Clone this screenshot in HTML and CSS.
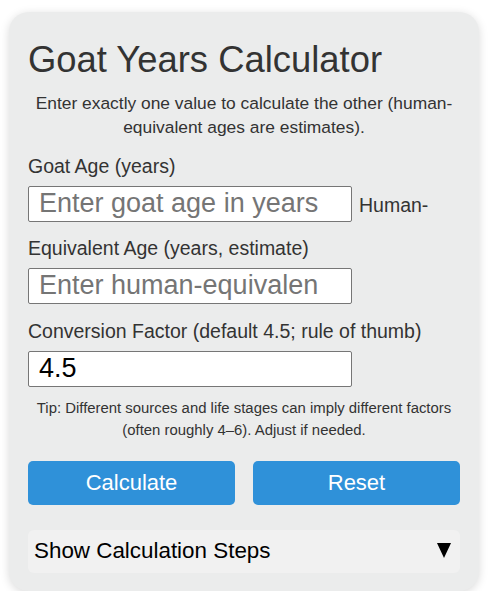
FILE: index.html
```html
<!DOCTYPE html>
<html>
<head>
  <title>Goat Years Calculator</title>
  <link rel="stylesheet" href="styles.css">
</head>
<body>
  <div class="calculator">
    <h1 class="title">Goat Years Calculator</h1>
    <p class="intro">Enter exactly one value to calculate the other (human-equivalent ages are estimates).</p>

    <label class="field-label" for="goatAge">Goat Age (years)</label>
    <div class="input-row">
      <input type="number" id="goatAge" class="field" placeholder="Enter goat age in years">
      <span class="field-label inline">Human-</span>
    </div>

    <label class="field-label" for="humanAge">Equivalent Age (years, estimate)</label>
    <input type="number" id="humanAge" class="field" placeholder="Enter human-equivalent age">

    <label class="field-label factor-label" for="factor">Conversion Factor (default 4.5; rule of thumb)</label>
    <input type="number" id="factor" class="field" value="4.5">

    <p class="tip">Tip: Different sources and life stages can imply different factors (often roughly 4&ndash;6). Adjust if needed.</p>

    <div class="buttons">
      <button class="button" id="calcBtn">Calculate</button>
      <button class="button" id="resetBtn">Reset</button>
    </div>

    <details class="steps">
      <summary>
        <span>Show Calculation Steps</span>
        <svg class="arrow" width="14" height="15" viewBox="0 0 14 15"><polygon points="0,0 14,0 7,15" fill="#000"/></svg>
      </summary>
    </details>
  </div>
</body>
</html>
```

FILE: styles.css
```css
body {
  font-family: "Liberation Sans", Arial, sans-serif;
  margin: 0;
  padding: 12px 0 0 9px;
  background-color: #fff;
  color: #333;
}

.calculator {
  width: 470px;
  box-sizing: border-box;
  padding: 20px 19px 18px;
  background-color: #ebecec;
  border-radius: 20px;
  box-shadow: 0 2px 10px rgba(0, 0, 0, 0.15);
}

.title {
  font-size: 36.4px;
  font-weight: normal;
  line-height: 42px;
  margin: 7px 0 0;
}

.intro {
  font-size: 17.4px;
  line-height: 24.4px;
  text-align: center;
  margin: 10px 0 0;
}

.field-label {
  display: block;
  font-size: 19.5px;
  margin: 15px 0 8px;
}

.field-label.factor-label {
  margin-top: 16px;
}

.field-label.inline {
  display: inline;
  margin: 0;
}

.input-row {
  display: flex;
  align-items: baseline;
  gap: 7px;
}

.field {
  width: 75%;
  height: 36px;
  box-sizing: border-box;
  padding: 0 33px 0 10px;
  font-family: "Liberation Sans", Arial, sans-serif;
  font-size: 27px;
  color: #000;
  background-color: #fff;
  border: 1px solid #767676;
  border-radius: 2px;
  display: block;
}

.field::-webkit-inner-spin-button,
.field::-webkit-outer-spin-button {
  -webkit-appearance: none;
  margin: 0;
}

.input-row .field {
  flex: 0 0 75%;
}

.field::placeholder {
  color: #757575;
}

.tip {
  font-size: 14.9px;
  line-height: 22px;
  text-align: center;
  margin: 10px 0 0;
}

.buttons {
  display: flex;
  gap: 18px;
  margin-top: 20px;
}

.button {
  flex: 1;
  height: 44px;
  background-color: #2f91d9;
  color: white;
  font-family: "Liberation Sans", Arial, sans-serif;
  font-size: 22px;
  border: none;
  border-radius: 5px;
  cursor: pointer;
}

.button:hover {
  background-color: #2379b8;
}

.steps {
  margin-top: 25px;
  background-color: #f1f1f1;
  border-radius: 6px;
}

.steps summary {
  display: flex;
  justify-content: space-between;
  align-items: center;
  list-style: none;
  padding: 8px 9px 9px 6px;
  font-size: 22.4px;
  color: #000;
  cursor: pointer;
}

.steps summary::-webkit-details-marker {
  display: none;
}
```
